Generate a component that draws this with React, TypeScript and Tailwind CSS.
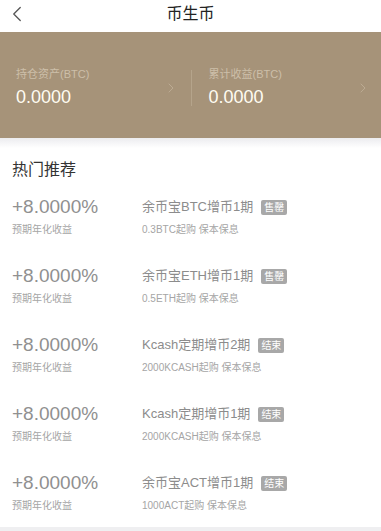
import { ChevronLeft, ChevronRight } from "lucide-react";

const items = [
  { name: "余币宝BTC增币1期", tag: "售罄", sub: "0.3BTC起购 保本保息" },
  { name: "余币宝ETH增币1期", tag: "售罄", sub: "0.5ETH起购 保本保息" },
  { name: "Kcash定期增币2期", tag: "结束", sub: "2000KCASH起购 保本保息" },
  { name: "Kcash定期增币1期", tag: "结束", sub: "2000KCASH起购 保本保息" },
  { name: "余币宝ACT增币1期", tag: "结束", sub: "1000ACT起购 保本保息" },
];

const font = "font-['Liberation_Sans','Noto_Sans_CJK_SC',sans-serif]";

export default function App() {
  return (
    <div className={`w-[381px] h-[531px] overflow-hidden bg-white flex flex-col ${font}`}>
      {/* top bar */}
      <header className="h-[32px] relative flex items-center justify-center bg-white">
        <ChevronLeft className="absolute left-[4px] top-[1px] text-[#555]" size={26} strokeWidth={1.2} />
        <span className="text-[16px] text-[#222] -mt-[4px]">币生币</span>
      </header>

      {/* assets panel */}
      <section className="h-[106px] bg-[#a69379] flex items-center pt-[6px]">
        <div className="flex-1 flex items-center pl-[16px] pr-[12px]">
          <div className="flex-1 flex flex-col">
            <span className="text-[11px] leading-[14px] text-[#cdbfa9]">持仓资产(BTC)</span>
            <span className="text-[18px] leading-[24px] mt-[4px] text-[#fffcf2]">0.0000</span>
          </div>
          <ChevronRight className="text-[#bcab93]" size={16} strokeWidth={1.5} />
        </div>
        <div className="w-px h-[36px] bg-[#b5a48b]" />
        <div className="flex-1 flex items-center pl-[17px] pr-[10px]">
          <div className="flex-1 flex flex-col">
            <span className="text-[11px] leading-[14px] text-[#cdbfa9]">累计收益(BTC)</span>
            <span className="text-[18px] leading-[24px] mt-[4px] text-[#fffcf2]">0.0000</span>
          </div>
          <ChevronRight className="text-[#bcab93]" size={16} strokeWidth={1.5} />
        </div>
      </section>

      <div className="h-[10px] bg-gradient-to-b from-[#ececef] to-white" />

      {/* hot list */}
      <section className="flex-1 flex flex-col">
        <h2 className="pl-[12px] pt-[12px] text-[16px] leading-[20px] text-[#333]">热门推荐</h2>
        {items.map((it) => (
          <div key={it.name} className="h-[69px] flex pt-[15px]">
            <div className="w-[130px] pl-[12px] flex flex-col">
              <span className="text-[19px] leading-[24px] text-[#909090]">+8.0000%</span>
              <span className="text-[10px] leading-[14px] mt-[4px] text-[#a5a5a5]">预期年化收益</span>
            </div>
            <div className="flex flex-col pl-[12px]">
              <div className="flex items-center h-[24px]">
                <span className="text-[13px] text-[#8c8c8c]">{it.name}</span>
                <span className="ml-[8px] px-[3px] h-[15px] leading-[15px] rounded-[2px] bg-[#a8a8a8] text-white text-[10px]">
                  {it.tag}
                </span>
              </div>
              <span className="text-[10px] leading-[14px] mt-[4px] text-[#a5a5a5]">{it.sub}</span>
            </div>
          </div>
        ))}
      </section>
      <div className="h-[4px] bg-[#efeff1]" />
    </div>
  );
}
